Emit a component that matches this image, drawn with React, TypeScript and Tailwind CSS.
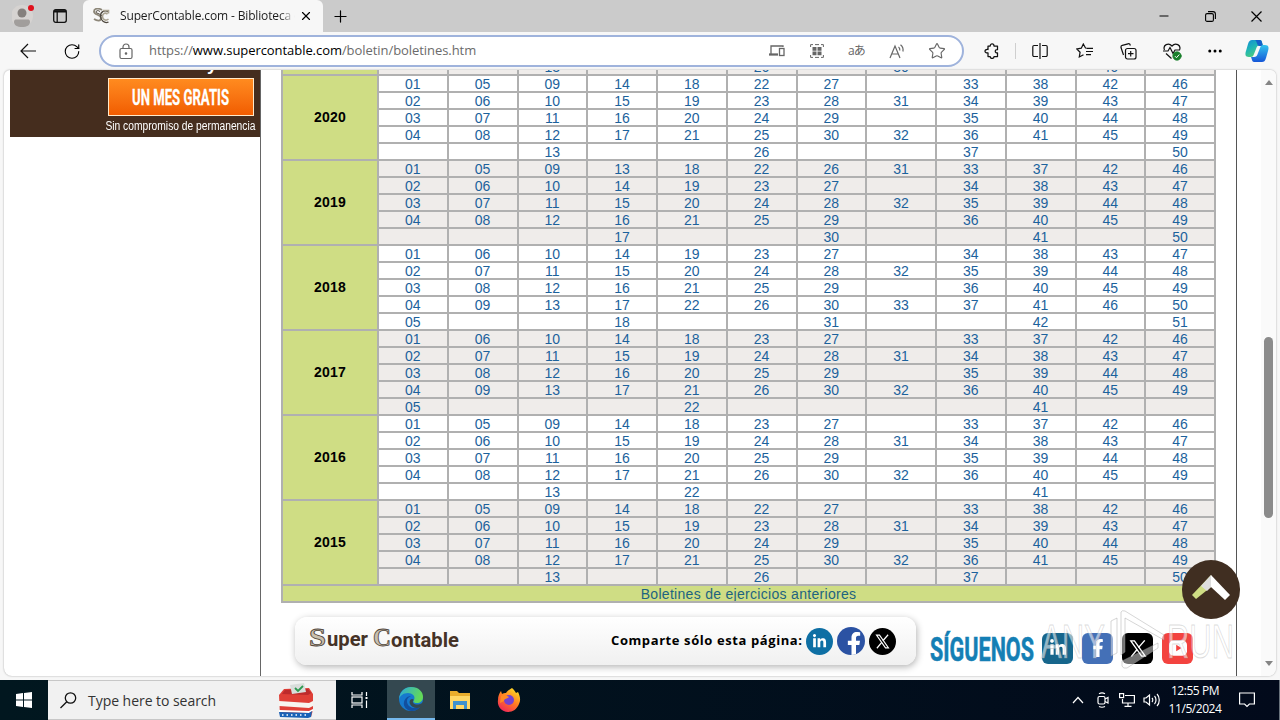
import React from "react";
import {
  CheckCircle2,
  Minus,
  MoreHorizontal,
  Plus,
  RotateCw,
  Star,
  X,
} from "lucide-react";
import { FaFacebookF, FaLinkedinIn } from "react-icons/fa";

type YearData = {
  year: string;
  rows: string[];
};

// Un guion marca un mes sin boletín en esa fila
const years: YearData[] = [
  {
    year: "2020",
    rows: [
      "01 05 09 14 18 22 27 - 33 38 42 46",
      "02 06 10 15 19 23 28 31 34 39 43 47",
      "03 07 11 16 20 24 29 - 35 40 44 48",
      "04 08 12 17 21 25 30 32 36 41 45 49",
      "- - 13 - - 26 - - 37 - - 50",
    ],
  },
  {
    year: "2019",
    rows: [
      "01 05 09 13 18 22 26 31 33 37 42 46",
      "02 06 10 14 19 23 27 - 34 38 43 47",
      "03 07 11 15 20 24 28 32 35 39 44 48",
      "04 08 12 16 21 25 29 - 36 40 45 49",
      "- - - 17 - - 30 - - 41 - 50",
    ],
  },
  {
    year: "2018",
    rows: [
      "01 06 10 14 19 23 27 - 34 38 43 47",
      "02 07 11 15 20 24 28 32 35 39 44 48",
      "03 08 12 16 21 25 29 - 36 40 45 49",
      "04 09 13 17 22 26 30 33 37 41 46 50",
      "05 - - 18 - - 31 - - 42 - 51",
    ],
  },
  {
    year: "2017",
    rows: [
      "01 06 10 14 18 23 27 - 33 37 42 46",
      "02 07 11 15 19 24 28 31 34 38 43 47",
      "03 08 12 16 20 25 29 - 35 39 44 48",
      "04 09 13 17 21 26 30 32 36 40 45 49",
      "05 - - - 22 - - - - 41 - -",
    ],
  },
  {
    year: "2016",
    rows: [
      "01 05 09 14 18 23 27 - 33 37 42 46",
      "02 06 10 15 19 24 28 31 34 38 43 47",
      "03 07 11 16 20 25 29 - 35 39 44 48",
      "04 08 12 17 21 26 30 32 36 40 45 49",
      "- - 13 - 22 - - - - 41 - -",
    ],
  },
  {
    year: "2015",
    rows: [
      "01 05 09 14 18 22 27 - 33 38 42 46",
      "02 06 10 15 19 23 28 31 34 39 43 47",
      "03 07 11 16 20 24 29 - 35 40 44 48",
      "04 08 12 17 21 25 30 32 36 41 45 49",
      "- - 13 - - 26 - - 37 - - 50",
    ],
  },
];

const Row = ({ row, gray }: { row: string; gray: boolean }) => (
  <div
    className={`grid h-[17px] grid-cols-12 border-t-2 border-[#b0b0b0] ${
      gray ? "bg-[#efecea]" : "bg-white"
    }`}
  >
    {row.split(" ").map((n, i) => (
      <div
        key={i}
        className="h-[15px] border-l-2 border-[#b0b0b0] text-center text-[14px] leading-[16px] text-[#1c629c]"
      >
        {n !== "-" && <a>{n}</a>}
      </div>
    ))}
  </div>
);

const BulletinTable = () => (
  <div className="ml-[20px] flex h-[533px] w-[935px] flex-col justify-end overflow-hidden border-r-2 border-b-2 border-[#b0b0b0] font-['Liberation_Sans',sans-serif]">
    <div className="flex shrink-0">
      <div className="w-[96px] border-l-2 border-[#b0b0b0] bg-[#cfdd84]" />
      <div className="w-[837px]">
        <Row row="- - 13 - - 26 - 30 - - 46 -" gray />
      </div>
    </div>
    {years.map((y, i) => (
      <div key={y.year} className="flex h-[85px] shrink-0">
        <div className="flex w-[96px] items-center justify-center border-t-2 border-l-2 border-[#b0b0b0] bg-[#cfdd84] text-[14px] font-bold tracking-[0.2px] text-black">
          {y.year}
        </div>
        <div className="w-[837px]">
          {y.rows.map((row, j) => (
            <Row key={j} row={row} gray={i % 2 === 1} />
          ))}
        </div>
      </div>
    ))}
    <div className="h-[17px] shrink-0 border-t-2 border-l-2 border-[#b0b0b0] bg-[#cfdd84] text-center text-[14px] leading-[16px] tracking-[0.300px] text-[#1d6480]">
      Boletines de ejercicios anteriores
    </div>
  </div>
);

const TabBar = () => (
  <div className="flex h-8 bg-[#cbcbcb]">
    <div className="flex w-[83px] items-center">
      <svg className="ml-[12px] h-6 w-6" viewBox="0 0 24 24">
        <circle cx="10" cy="12" r="11" fill="#d6d3d1" />
        <circle cx="10" cy="9" r="4.500" fill="#85807d" />
        <path d="M2 18c0-2 1-2.500 2.500-2.500h11c1.500 0 2.500.5 2.500 2.500 0 3-3 5-8 5s-8-2-8-5z" fill="#a19e9c" />
        <circle cx="19" cy="4" r="3" fill="#e0101c" />
      </svg>
      <svg className="ml-[17px] h-[14px] w-[14px]" viewBox="0 0 14 14" fill="none" stroke="#111" strokeWidth="1.3">
        <rect x="0.700" y="0.700" width="12.600" height="12.600" rx="2" />
        <path d="M1 2.300h12" strokeWidth="2.400" />
        <path d="M4.200 3v10" />
      </svg>
    </div>
    <div className="flex w-[240px] items-center rounded-t-md bg-[#f7f7f7] pr-[10px] pl-[10px]">
      <svg className="h-[17px] w-[17px]" viewBox="0 0 17 17" fill="none">
        <path d="M9 2C6 0 1 0 1 3.500S8 6.500 8 10s-4 3-7 1" stroke="#8d8779" strokeWidth="1.800" />
        <path d="M7 3.500C5 2 3 2.500 3 4s6 2 6.500 5" stroke="#4f493f" strokeWidth="1" />
        <path d="M15.500 4c-4-3-8 0-8 4s4 8 8 6" stroke="#4f493f" strokeWidth="1.300" />
        <path d="M14.500 6c-3-2-5 0-5 2.500s3 5 6 2.500M10 2.500h5.500v3" stroke="#aaa391" strokeWidth="1.600" />
      </svg>
      <span className="ml-[10px] w-[177px] bg-linear-to-r from-[#1b1b1b] from-90% to-transparent to-99% bg-clip-text font-['Open_Sans',sans-serif] text-[12px] tracking-[-0.140px] whitespace-nowrap text-transparent">
        SuperContable.com - Biblioteca d
      </span>
      <X className="ml-auto h-[14px] w-[14px] shrink-0 text-black" strokeWidth={2} />
    </div>
    <Plus className="mt-[7px] ml-[8px] h-[19px] w-[19px] text-black" strokeWidth={1.500} />
    <div className="ml-auto flex items-center pr-[18px] text-black">
      <Minus className="h-[14px] w-[14px]" strokeWidth={1.700} />
      <svg className="ml-[34px] h-[11px] w-[11px]" viewBox="0 0 11 11" fill="none" stroke="#000" strokeWidth="1.100">
        <rect x="0.600" y="2.600" width="7.800" height="7.800" rx="1.500" />
        <path d="M3 0.600h5a2.400 2.400 0 0 1 2.400 2.400v5" />
      </svg>
      <svg className="ml-[35px] h-[11px] w-[11px]" viewBox="0 0 11 11" stroke="#000" strokeWidth="1.200">
        <path d="M0.500 0.500l10 10M10.500 0.500l-10 10" />
      </svg>
    </div>
  </div>
);

const Copilot = () => (
  <svg className="h-6 w-6" viewBox="0 0 24 24">
    <defs>
      <linearGradient id="copA" x1="0" y1="0" x2="0.600" y2="1">
        <stop offset="0" stopColor="#1289d8" />
        <stop offset="0.500" stopColor="#20b6b4" />
        <stop offset="1" stopColor="#55cf72" />
      </linearGradient>
      <linearGradient id="copB" x1="0" y1="0" x2="0" y2="1">
        <stop offset="0" stopColor="#33c4ee" />
        <stop offset="1" stopColor="#1556d8" />
      </linearGradient>
    </defs>
    <path d="M7 1h8c2 0 2 3 3 5h-3c-2 0-3 1-4 4l-2 5c-1 3-2 3-5 3-4 0-4-3-3-6l2-7c1-3 2-4 4-4z" fill="url(#copA)" />
    <path d="M10 1h5c2 0 2 3 3 6h-4c-2 0-2-5-4-6z" fill="#1461ca" />
    <path d="M17 23H9c-2 0-2-3-3-5h3c2 0 3-1 4-4l2-5c1-3 2-3 5-3 4 0 4 3 3 6l-2 7c-1 3-2 4-4 4z" fill="url(#copB)" />
  </svg>
);

const Toolbar = () => (
  <div className="flex h-[38px] items-center bg-[#f7f7f7] font-['Open_Sans',sans-serif] text-black">
    <svg className="ml-[20px] h-4 w-4" viewBox="0 0 16 16" fill="none" stroke="#111" strokeWidth="1.200">
      <path d="M16 8H1M8 1L1 8l7 7" />
    </svg>
    <RotateCw className="ml-[27px] h-[19px] w-[18px]" strokeWidth={1.500} />
    <div className="ml-[18px] flex h-[32px] w-[865px] items-center rounded-full border-2 border-[#9fb3dc] bg-white pl-[18px] text-[#666]">
      <svg className="h-[17px] w-[14px]" viewBox="0 0 14 17" fill="none" stroke="#666" strokeWidth="1.200">
        <rect x="1" y="5.500" width="12" height="10" rx="1.500" />
        <path d="M4 5.500V4a3 3 0 0 1 6 0v1.500" />
        <circle cx="7" cy="10.500" r="0.700" fill="#666" />
      </svg>
      <span className="ml-[16px] text-[13px] tracking-[-0.060px] whitespace-nowrap text-[#6b6b6b]">
        https://<span className="text-black">www.supercontable.com</span>/boletin/boletines.htm
      </span>
      <div className="mr-[16px] ml-auto flex items-center">
        <svg className="h-[12px] w-[16px]" viewBox="0 0 16 12" fill="none" stroke="#666" strokeWidth="1.300">
          <path d="M14 2V1H2v8M0 9.500h9" />
          <path d="M0 9.500h9" strokeWidth="2" />
          <rect x="10.500" y="3.500" width="4.500" height="7" />
        </svg>
        <svg className="ml-[25px] h-[14px] w-[14px]" viewBox="0 0 14 14" fill="none" stroke="#666">
          <path d="M0.600 3V0.600H3M11 0.600h2.400V3M13.400 11v2.400H11M3 13.400H0.600V11M5 .6h4M5 13.400h4" strokeWidth="1" />
          <path d="M2.500 4.800h4M7.500 4.800h4M2.500 9.300h4M7.500 9.300h4" strokeWidth="3.800" />
        </svg>
        <span className="ml-[24px] w-[18px] font-['Open_Sans','Noto_Sans_CJK_JP',sans-serif] text-[12px] leading-none tracking-[-1px] whitespace-nowrap">
          aあ
        </span>
        <svg className="ml-[23px] h-[15px] w-[17px]" viewBox="0 0 17 15" fill="none" stroke="#666" strokeWidth="1.200">
          <path d="M1 14L6 2l5 12M3 10h6M9.500 3c1.300 1 1.500 2 1.300 3.500M11.500 0.800c2.500 2 3 4 2.400 6.700" />
        </svg>
        <Star className="ml-[22px] h-[18px] w-[18px]" strokeWidth={1.500} />
      </div>
    </div>
    <svg className="ml-[20px] h-4 w-4" viewBox="0 0 16 16" fill="none" stroke="#111" strokeWidth="1.250">
      <path d="M4 3h2.200c0-2.800 3.800-2.800 3.800 0h3.500v3.700c-3-.5-3 3.600 0 3.100v3.700H10c0 2.600-3.800 2.600-3.800 0H4V9.900c-4 .5-4-3.900 0-3.400z" strokeLinejoin="round" />
    </svg>
    <div className="ml-[15px] h-[16px] w-px bg-[#cfcfcf]" />
    <svg className="ml-[16px] h-[16px] w-4" viewBox="0 0 16 16" fill="none" stroke="#111" strokeWidth="1.200">
      <path d="M6 2.500H2A1.200 1.200 0 0 0 .8 3.700v8.600A1.200 1.200 0 0 0 2 13.500h4M10 2.500h4a1.200 1.200 0 0 1 1.200 1.200v8.600a1.200 1.200 0 0 1-1.200 1.200h-4M8 0v16" />
    </svg>
    <svg className="ml-[28px] h-4 w-[17px]" viewBox="0 0 17 16" fill="none" stroke="#111" strokeWidth="1.200">
      <path d="M13.500 5.300L9.500 5 7.300 1 5.300 5.200.8 6l3.300 3.200L3.300 14l4.200-2.300M11 5.300h6M10 8.500h7M10 11.700h5" />
    </svg>
    <svg className="ml-[27px] h-[17px] w-[17px]" viewBox="0 0 17 17" fill="none" stroke="#111" strokeWidth="1.200">
      <rect x="5.500" y="5.500" width="10.500" height="10.500" rx="2" />
      <path d="M10.700 8v5.500M8 10.700h5.500M3.500 12L1 4.500C.8 3.300 1.300 2.600 2.300 2.300L8 .8c1.300-.3 2 .2 2.400 1.700" />
    </svg>
    <div className="relative ml-[26px] h-[17px] w-[18px]">
      <svg className="h-[17px] w-[18px]" viewBox="0 0 18 17" fill="none" stroke="#111" strokeWidth="1.200">
        <path d="M1.500 7C-.5 2 5.500-1 9 3c3.500-4 9.500-1 7.500 4M0 8h5l2-3.500 3 6L12 7h5M3 10.500l5.500 5" />
      </svg>
      <CheckCircle2 className="absolute top-[8px] left-[9px] h-[10px] w-[10px] fill-[#19802b] text-[#19802b]" strokeWidth={2} />
      <svg className="absolute top-[8px] left-[9px] h-[10px] w-[10px]" viewBox="0 0 10 10" fill="none" stroke="#fff">
        <path d="M3 5.200l1.500 1.500L7.300 3.500" />
      </svg>
    </div>
    <MoreHorizontal className="ml-[25px] h-[18px] w-[18px]" strokeWidth={2} />
    <div className="ml-[21px]">
      <Copilot />
    </div>
  </div>
);

const Banner = () => (
  <div className="flex h-[67px] w-[250px] flex-col items-end overflow-hidden bg-[#452d1e]">
    <div className="relative h-[8px] w-full">
      <span className="absolute -top-[15px] left-[197px] font-['Liberation_Sans',sans-serif] text-[18px] leading-none font-bold text-white">
        y
      </span>
    </div>
    <div className="mr-[6px] flex h-[38px] w-[146px] items-center justify-center border border-[#ffe9c8] bg-linear-to-b from-[#ff8b1f] to-[#f15c00]">
      <svg className="h-[24px] w-[100px]" viewBox="0 0 100 24">
        <text x="1" y="19.500" fill="#fff" stroke="#fff" strokeWidth="0.300" textLength="97" lengthAdjust="spacingAndGlyphs" fontFamily="Roboto, sans-serif" fontSize="22" fontWeight="bold">
          UN MES GRATIS
        </text>
      </svg>
    </div>
    <span className="mt-[2px] mr-[5px] origin-right scale-x-[0.855] font-['Liberation_Sans',sans-serif] text-[12px] leading-[17px] whitespace-nowrap text-white">
      Sin compromiso de permanencia
    </span>
  </div>
);

const XMark = ({ className }: { className: string }) => (
  <svg className={className} viewBox="0 0 20 20" fill="none" stroke="#fff">
    <path d="M2 1.500h4L18 18.500h-4z" strokeWidth="1.500" />
    <path d="M17.500 1l-7 8M9 11.200L2.500 19" strokeWidth="1.600" />
  </svg>
);

const ShareBar = () => (
  <div className="flex h-[48px] w-[621px] items-center rounded-xl bg-linear-to-b from-white to-[#f0f0f0] shadow-[1px_2px_7px_rgba(0,0,0,0.3)]">
    <svg className="ml-[14px] h-[26px] w-[152px] shrink-0 -translate-y-[3px]" viewBox="0 0 152 26">
      <g stroke="#50453a" strokeWidth="0.800" fontFamily="Liberation Serif, serif" fontSize="25" fontWeight="bold">
        <text x="0" y="21" fill="#c9bfae" textLength="17" lengthAdjust="spacingAndGlyphs">S</text>
        <text x="64" y="21" fill="#c9bfae" textLength="18" lengthAdjust="spacingAndGlyphs">C</text>
      </g>
      <g fill="#453226" fontFamily="Roboto, sans-serif" fontSize="20" fontWeight="bold">
        <text x="18" y="21" textLength="41" lengthAdjust="spacingAndGlyphs">uper</text>
        <text x="82" y="22" textLength="68" lengthAdjust="spacingAndGlyphs">ontable</text>
      </g>
    </svg>
    <svg className="ml-auto h-[20px] w-[192px] -translate-y-px" viewBox="0 0 192 20">
      <text x="0" y="15" textLength="191" lengthAdjust="spacing" fontFamily="Open Sans, sans-serif" fontSize="13" fontWeight="bold">
        Comparte sólo esta página:
      </text>
    </svg>
    <div className="mr-[20px] ml-[3px] flex items-center gap-[4px]">
      <span className="flex h-[27px] w-[27px] items-center justify-center rounded-full bg-[#0e6fa4] text-white">
        <FaLinkedinIn className="h-[15px] w-[15px]" />
      </span>
      <span className="flex h-[28px] w-[28px] items-end justify-center overflow-hidden rounded-full bg-[#2b52a3] text-white">
        <FaFacebookF className="ml-[5px] h-[23px] w-[16px]" />
      </span>
      <span className="flex h-[27px] w-[27px] items-center justify-center rounded-full bg-black">
        <XMark className="h-[15px] w-[15px]" />
      </span>
    </div>
  </div>
);

const FollowUs = () => (
  <div className="mt-[12px] ml-[13px] flex h-[36px] items-center">
    <svg className="h-[36px] w-[106px]" viewBox="0 0 106 36">
      <text x="1" y="32" fill="#147fb5" stroke="#147fb5" strokeWidth="0.600" textLength="104" lengthAdjust="spacingAndGlyphs" fontFamily="Roboto, sans-serif" fontSize="34" fontWeight="bold">
        SÍGUENOS
      </text>
    </svg>
    <div className="mt-[2px] ml-[7px] flex gap-[9px] text-white">
      <span className="flex h-[31px] w-[31px] items-center justify-center rounded-md bg-[#17668c]">
        <FaLinkedinIn className="h-[18px] w-[18px]" />
      </span>
      <span className="flex h-[31px] w-[31px] items-center justify-center rounded-md bg-[#4470b7]">
        <FaFacebookF className="h-[18px] w-[18px]" />
      </span>
      <span className="flex h-[31px] w-[31px] items-center justify-center rounded-md bg-black">
        <XMark className="h-[19px] w-[18px]" />
      </span>
      <span className="flex h-[31px] w-[31px] items-center justify-center rounded-md bg-[#f3433f]">
        <svg className="h-[16px] w-[18px]" viewBox="0 0 20 17">
          <rect width="20" height="17" rx="5" fill="#fff" />
          <path d="M8 5l6 3.500L8 12z" fill="#f3433f" />
        </svg>
      </span>
    </div>
  </div>
);

const Watermark = () => (
  <svg className="absolute top-[537px] left-[1030px] h-[66px] w-[206px]" viewBox="0 0 206 66">
    <g fill="#fff" fillOpacity="0.550" stroke="#999" strokeOpacity="0.350" strokeWidth="1" fontFamily="Liberation Sans, sans-serif" fontSize="49">
      <text x="7" y="51" textLength="64" lengthAdjust="spacingAndGlyphs">ANY</text>
      <text x="133" y="51" textLength="67" lengthAdjust="spacingAndGlyphs">RUN</text>
    </g>
    <g fill="#fff" fillOpacity="0.450" stroke="#999" strokeOpacity="0.400" strokeLinejoin="round">
      <path d="M87 5q1-2 4-1l39 24v5L91 11v34l-4 3z" />
      <path d="M77 14l6-3v35l-6 3zM88 54l36-18v5L93 61q-4 1-5-2z" />
    </g>
  </svg>
);

const Page = () => (
  <div className="relative mr-[4px] ml-[4px] flex h-[606px] overflow-hidden rounded-lg rounded-t-md bg-white shadow-[0_0_2px_rgba(0,0,0,0.350)]">
    <div className="w-[257px] shrink-0 border-r border-[#666] pl-[6px]">
      <Banner />
    </div>
    <div className="flex w-[976px] shrink-0 flex-col border-r border-[#555]">
      <BulletinTable />
      <div className="mt-[14px] flex pl-[34px]">
        <ShareBar />
        <FollowUs />
      </div>
    </div>
    <div className="ml-auto flex w-[15px] flex-col items-center bg-[#fafafa]">
      <div className="mt-[10px] border-x-[4.500px] border-b-[5px] border-x-transparent border-b-[#858585]" />
      <div className="mt-[252px] h-[181px] w-[9px] rounded-full bg-[#8b8b8b]" />
      <div className="mt-auto mb-[10px] border-x-[4.500px] border-t-[5px] border-x-transparent border-t-[#858585]" />
    </div>
    <a className="absolute top-[490px] left-[1178px] flex h-[59px] w-[58px] items-center justify-center rounded-full bg-[#402e21]">
      <svg className="h-[59px] w-[58px]" viewBox="0 0 58 59">
        <path d="M10 35l19-20v12L14 39z" fill="#cfdd84" />
        <path d="M19 26L29 15l5 13-5-1-4 4z" fill="#dedede" />
        <path d="M29 15l19 20-5 5-14-13z" fill="#fff" />
      </svg>
    </a>
    <Watermark />
  </div>
);

const BallotBox = () => (
  <svg className="h-[37px] w-[36px]" viewBox="0 0 36 37">
    <path d="M1 13l5-6 25-1 4 6v16l-2 7-31-2z" fill="#df3f37" />
    <path d="M4 12l3-4 23-1 3 4-3 2z" fill="#bd2b2c" />
    <path d="M1 19l30 2 4-2v5l-4 2-30-2z" fill="#f7f4ef" />
    <path d="M1 28l30 1 4-2v2l-4 2-30-1z" fill="#fff" />
    <path d="M1 30l30 1 3-2-1 6-3 1-28-1z" fill="#1962b7" />
    <path d="M4 33h26" stroke="#fff" strokeWidth="1.500" strokeDasharray="1.500 3" />
    <path d="M12 3l14-2 2 9-14 2z" fill="#d9dddb" />
    <path d="M17 6l3 3 5-5" fill="none" stroke="#2d9950" strokeWidth="1.800" />
  </svg>
);

const EdgeIcon = () => (
  <svg className="h-6 w-6" viewBox="0 0 24 24">
    <defs>
      <linearGradient id="edgeTop" x1="0" y1="0" x2="1" y2="0.300">
        <stop offset="0" stopColor="#2aa9dd" />
        <stop offset="1" stopColor="#63d957" />
      </linearGradient>
    </defs>
    <circle cx="12" cy="12" r="12" fill="#1679ce" />
    <path d="M0 12C1 4 6 0 12 0c8 0 12 5 12 10 0 4-3 6-6 6-4 0-4-2-3-3 2-4-2-7-6-7-5 0-8 3-9 6z" fill="url(#edgeTop)" />
    <path d="M8 14c0 5 5 9 13 6-3 4-7 4-9 4-5-1-8-5-7-9 1-4 4-6 7-6-3 1-4 3-4 5z" fill="#124f9f" />
    <path d="M14 14c-1 3 4 5 9 2l1-1v4l-2 1c-4 2-9 1-11-3-1-2 0-5 2-5 2 0 2 1 1 2z" fill="#344850" />
  </svg>
);

const FolderIcon = () => (
  <svg className="h-[20px] w-[22px]" viewBox="0 0 22 20">
    <path d="M1 1h7l2 2h11v16H1z" fill="#e9ad2c" />
    <path d="M1 6h20v13H1z" fill="#ffd765" />
    <path d="M4 19v-8h14v8h-3v-4H7v4z" fill="#3e91cd" />
  </svg>
);

const FirefoxIcon = () => (
  <svg className="h-6 w-6" viewBox="0 0 24 24">
    <defs>
      <linearGradient id="fox" x1="0.800" y1="0" x2="0.200" y2="1">
        <stop offset="0" stopColor="#ffe226" />
        <stop offset="0.500" stopColor="#ff7a22" />
        <stop offset="1" stopColor="#f0225d" />
      </linearGradient>
    </defs>
    <path d="M15 0c2 2 3 3 4 5l2-1c2 4 3 8 1 12-2 5-6 8-11 8C4 24 0 18 1 12c0-4 1-6 3-9l1 3c1-1 3-1 4-1 1-2 4-4 6-5z" fill="url(#fox)" />
    <circle cx="12" cy="12" r="5" fill="#7542d0" />
    <path d="M4 8c3-2 5-1 8 1-1 2-5 1-5 4l-4 2z" fill="#ff8b23" />
  </svg>
);

const Taskbar = () => (
  <div className="flex h-10 bg-linear-to-r from-[#01171f] to-[#020a1b] font-['Open_Sans',sans-serif] text-white">
    <div className="flex w-12 items-center justify-center">
      <svg className="h-4 w-4" viewBox="0 0 16 16" fill="#fff">
        <path d="M0 2l7-1v6.500H0zM8 .9L16 0v7.500H8zM0 8.500h7V15l-7-1zM8 8.500h8V16l-8-1z" />
      </svg>
    </div>
    <div className="flex w-[288px] items-center border-y border-[#c7c7c7] bg-[#f1f1f1]">
      <svg className="ml-[12px] h-[17px] w-[17px]" viewBox="0 0 17 17" fill="none" stroke="#111" strokeWidth="1.300">
        <circle cx="10.500" cy="6" r="5.200" />
        <path d="M6.800 9.700L0.500 16" />
      </svg>
      <span className="ml-[11px] text-[14px] tracking-[-0.040px] whitespace-nowrap text-[#333]">
        Type here to search
      </span>
      <div className="mr-[22px] ml-auto">
        <BallotBox />
      </div>
    </div>
    <div className="flex w-[51px] items-center justify-center">
      <svg className="h-4 w-[17px] -translate-x-[2px]" viewBox="0 0 17 16" fill="none" stroke="#fff" strokeWidth="1.200">
        <path d="M1 0v3h10V0M1 16v-3h10v3M15.500 0v4M15.500 8.500V16" />
        <rect x="1" y="5" width="10" height="6" />
        <path d="M14.500 6h2" strokeWidth="2" />
      </svg>
    </div>
    <div className="flex w-12 items-center justify-center border-b-2 border-[#76b9ed] bg-[#344850]">
      <EdgeIcon />
    </div>
    <div className="flex w-[49px] items-center justify-center">
      <FolderIcon />
    </div>
    <div className="flex w-[49px] items-center justify-center">
      <FirefoxIcon />
    </div>
    <div className="ml-auto flex items-center">
      <svg className="h-[8px] w-[12px]" viewBox="0 0 12 8" fill="none" stroke="#fff" strokeWidth="1.200">
        <path d="M1 7l5-5.500L11 7" />
      </svg>
      <svg className="ml-[13px] h-4 w-[12px]" viewBox="0 0 12 16" fill="none" stroke="#fff" strokeWidth="1.200">
        <rect x="1" y="4.500" width="7" height="7.500" rx="1.500" />
        <path d="M8 7l3-1.500v5.500L8 9.500M2 1.700c2-1 4-1 6 0M2 14.500c2 1 4 1 6 0" />
      </svg>
      <svg className="ml-[10px] h-[14px] w-4" viewBox="0 0 16 14" fill="none" stroke="#fff" strokeWidth="1.200">
        <path d="M6 2.500h9.400v7.500H3.500V6M9 10v3M5.500 13.400h7" />
        <rect x="0.600" y="0.600" width="4" height="4" />
      </svg>
      <svg className="ml-[8px] h-[14px] w-[17px]" viewBox="0 0 17 14" fill="none" stroke="#fff" strokeWidth="1.200">
        <path d="M1 5v4h2l3.500 3V2L3 5zM9 5c1 1 1 3 0 4M11.500 3c2 2 2 6 0 8M14 1c3 3 3 9 0 12" />
      </svg>
      <div className="ml-[8px] w-[54px] text-center text-[12px] leading-[18px] tracking-[-0.450px] whitespace-nowrap">
        <div>12:55 PM</div>
        <div>11/5/2024</div>
      </div>
      <svg className="mr-[24px] ml-[17px] h-4 w-4" viewBox="0 0 16 16" fill="none" stroke="#fff" strokeWidth="1.200">
        <path d="M.6 1h14.800v11h-5L8 14.500 5.600 12h-5z" />
      </svg>
      <div className="h-10 w-px bg-[#68717b]" />
    </div>
  </div>
);

export default function App() {
  return (
    <div className="flex h-[720px] w-[1280px] flex-col overflow-hidden bg-[#f7f7f7]">
      <TabBar />
      <Toolbar />
      <Page />
      <div className="mt-auto">
        <Taskbar />
      </div>
    </div>
  );
}
